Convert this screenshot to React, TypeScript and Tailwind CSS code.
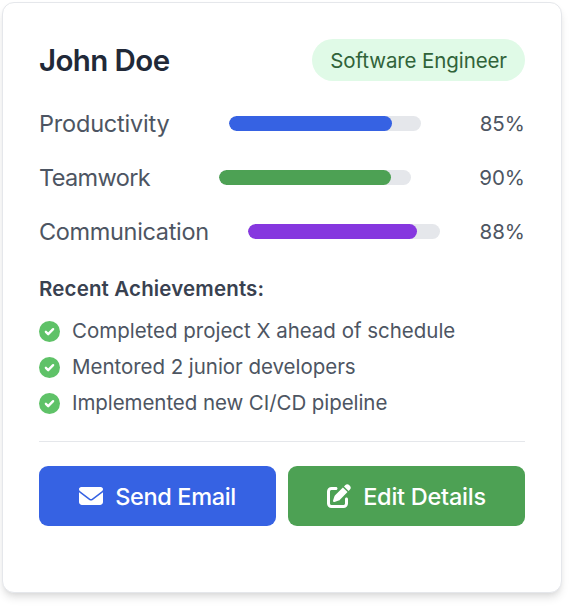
import { FaEnvelope, FaPenToSquare } from "react-icons/fa6";

const metrics = [
  { label: "Productivity", value: 85, color: "bg-[#3662e3]", tracking: "tracking-[-0.2px]" },
  { label: "Teamwork", value: 90, color: "bg-[#4da154]", tracking: "tracking-[-0.62px]" },
  { label: "Communication", value: 88, color: "bg-[#8637df]", tracking: "tracking-[-0.34px]" },
];

const achievements = [
  { text: "Completed project X ahead of schedule", tracking: "tracking-[-0.02px]" },
  { text: "Mentored 2 junior developers", tracking: "tracking-[-0.04px]" },
  { text: "Implemented new CI/CD pipeline", tracking: "tracking-[-0.07px]" },
];

function CheckBadge() {
  return (
    <svg viewBox="0 0 512 512" className="mr-3 size-[21px] shrink-0">
      <circle cx="256" cy="256" r="256" fill="#5fc268" />
      <path d="M168 264l56 56 120-120" fill="none" stroke="white" strokeWidth="58" strokeLinecap="round" strokeLinejoin="round" />
    </svg>
  );
}

export default function App() {
  return (
    <div className="h-[612px] w-[582px] bg-white pl-[2px] pt-[2px] font-['Inter',sans-serif]">
      <div className="h-[591px] w-[560px] rounded-[12px] border border-gray-200 bg-white px-9 pt-9 shadow-[0_6px_9px_-1.5px_rgba(0,0,0,0.1),0_3px_6px_-3px_rgba(0,0,0,0.1)]">
        <div className="flex h-[42px] items-center justify-between">
          <h2 className="pt-px text-[29.5px] font-semibold tracking-[-0.6px] text-[#212938]">John Doe</h2>
          <span className="flex h-[42px] items-center rounded-full bg-[#e0fae7] px-[18px] pt-[2px] text-[20.5px] tracking-[-0.1px] text-[#306339]">Software Engineer</span>
        </div>
        <div className="mt-6 flex flex-col gap-[18px]">
          {metrics.map((m) => (
            <div key={m.label} className="flex h-9 items-center justify-between">
              <span className={`pt-[2px] text-[23.5px] text-[#4d5562] ${m.tracking}`}>{m.label}</span>
              <div className="h-[15px] w-[192px] overflow-hidden rounded-full bg-gray-200">
                <div className={`h-full rounded-full ${m.color}`} style={{ width: `${m.value}%` }} />
              </div>
              <span className="pt-[2px] text-[20.5px] text-[#4d5562]">{m.value}%</span>
            </div>
          ))}
        </div>
        <h3 className="mt-[25px] text-[20.5px] font-semibold leading-[30px] tracking-[0.15px] text-[#394150]">Recent Achievements:</h3>
        <ul className="mt-3 flex flex-col gap-[6px]">
          {achievements.map((a) => (
            <li key={a.text} className={`flex h-[30px] items-center text-[20.5px] text-[#4d5562] ${a.tracking}`}>
              <CheckBadge />
              {a.text}
            </li>
          ))}
        </ul>
        <div className="mt-[23px] flex gap-3 border-t border-gray-200 pt-6">
          <button className="flex h-[60px] flex-1 items-center justify-center gap-3 rounded-[9px] bg-[#3662e3] text-[23.5px] font-medium tracking-[-0.35px] text-white">
            <FaEnvelope className="size-6" />
            <span className="pt-px">Send Email</span>
          </button>
          <button className="flex h-[60px] flex-1 items-center justify-center gap-3 rounded-[9px] bg-[#4da154] text-[23.5px] font-medium tracking-[-0.25px] text-white">
            <FaPenToSquare className="size-6" />
            <span className="pt-px">Edit Details</span>
          </button>
        </div>
      </div>
    </div>
  );
}
